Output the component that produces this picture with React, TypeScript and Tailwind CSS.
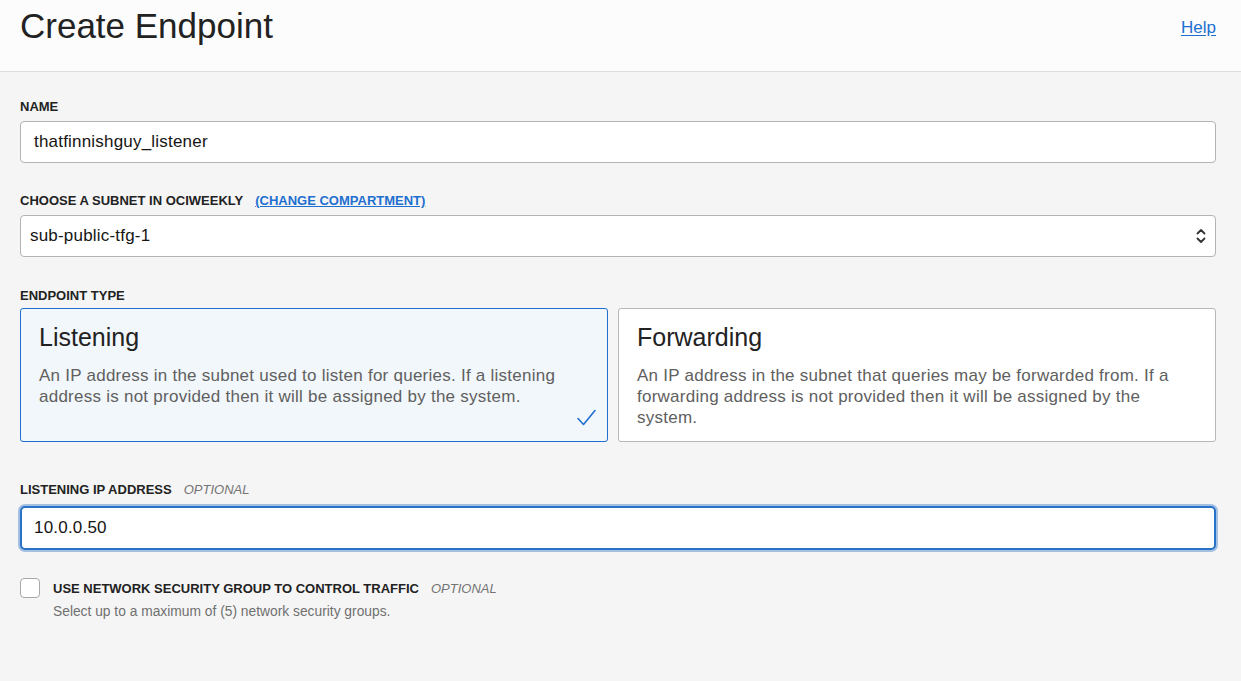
import { useState } from 'react';

const TYPES = [
  {
    key: 'listening',
    title: 'Listening',
    description:
      'An IP address in the subnet used to listen for queries. If a listening address is not provided then it will be assigned by the system.',
  },
  {
    key: 'forwarding',
    title: 'Forwarding',
    description:
      'An IP address in the subnet that queries may be forwarded from. If a forwarding address is not provided then it will be assigned by the system.',
  },
];

export default function App() {
  const [type, setType] = useState('listening');
  const [name, setName] = useState('thatfinnishguy_listener');
  const [ip, setIp] = useState('10.0.0.50');
  const [useNsg, setUseNsg] = useState(false);

  return (
    <div
      className="min-h-screen bg-[#f5f5f5] text-[#161513]"
      style={{ fontFamily: '"Liberation Sans", Arial, sans-serif' }}
    >
      <header className="h-[72px] bg-[#fcfcfc] border-b border-[#dcdcdc] flex items-start justify-between pl-5 pr-[25px]">
        <h1 className="text-[35px] leading-none pt-[8px] text-[#222]">Create Endpoint</h1>
        <a href="#" className="mt-[15px] text-[17px] text-[#1e6fd0] underline underline-offset-2">
          Help
        </a>
      </header>

      <div className="pl-5 pr-[25px] pt-[27px]">
        <label className="block text-[13px] font-semibold leading-4 text-[#222]">NAME</label>
        <input
          value={name}
          onChange={(e) => setName(e.target.value)}
          className="mt-[6px] w-full h-[42px] rounded bg-white border border-[#b3b3b8] px-[13px] text-[17px] tracking-[0.2px] text-[#161513] outline-none"
        />

        <div className="mt-[30px] flex items-center text-[13px] font-semibold leading-4 text-[#222]">
          <span>
            CHOOSE A SUBNET IN <span className="font-bold">OCIWEEKLY</span>
          </span>
          <a href="#" className="ml-[12px] text-[#1e6fd0] underline underline-offset-1">
            (CHANGE COMPARTMENT)
          </a>
        </div>
        <div className="mt-[6px] relative h-[42px] rounded bg-white border border-[#b3b3b8] flex items-center px-[9px] text-[17px] tracking-[0.2px]">
          <span>sub-public-tfg-1</span>
          <svg
            className="absolute right-[8px] top-1/2 -translate-y-1/2"
            width="12"
            height="18"
            viewBox="0 0 12 18"
            fill="none"
            stroke="#333"
            strokeWidth="1.8"
            strokeLinecap="round"
            strokeLinejoin="round"
          >
            <path d="M2.5 6.5 L6 3 L9.5 6.5" />
            <path d="M2.5 11.5 L6 15 L9.5 11.5" />
          </svg>
        </div>

        <div className="mt-[31px] text-[13px] font-semibold leading-4 text-[#222]">ENDPOINT TYPE</div>
        <div className="mt-[4px] grid grid-cols-[588px_1fr] gap-[10px]">
          {TYPES.map((t) => {
            const active = type === t.key;
            return (
              <div
                key={t.key}
                onClick={() => setType(t.key)}
                className={`relative h-[134px] cursor-pointer rounded-[3px] pl-[18px] pr-[30px] pt-[13px] ${
                  active ? 'bg-[#f2f7fb] border border-[#1e6fd0]' : 'bg-white border border-[#b8b8bc]'
                }`}
              >
                <div className="text-[25px] leading-[30px] text-[#222]">{t.title}</div>
                <p className="mt-[13px] text-[17px] leading-[21px] tracking-[0.25px] text-[#606060]">
                  {t.description}
                </p>
                {active && (
                  <svg
                    className="absolute right-[11px] bottom-[15px]"
                    width="19"
                    height="17"
                    viewBox="0 0 19 17"
                    fill="none"
                    stroke="#1e6fd0"
                    strokeWidth="1.6"
                    strokeLinecap="round"
                    strokeLinejoin="round"
                  >
                    <path d="M1 9.5 L6.5 15.5 L18 1.5" />
                  </svg>
                )}
              </div>
            );
          })}
        </div>

        <div className="mt-[40px] flex items-center text-[13px] leading-4">
          <span className="font-semibold text-[#222]">LISTENING IP ADDRESS</span>
          <span className="ml-[12px] italic text-[#747474]">OPTIONAL</span>
        </div>
        <input
          value={ip}
          onChange={(e) => setIp(e.target.value)}
          className="mt-[8px] w-full h-[44px] rounded-[5px] bg-white border-2 border-[#2a72c8] ring-2 ring-[#2a72c8]/40 px-[12px] text-[17px] tracking-[0.2px] text-[#161513] outline-none"
        />

        <div className="mt-[28px] flex items-start">
          <button
            onClick={() => setUseNsg(!useNsg)}
            className="w-[20px] h-[20px] rounded-[4px] border border-[#a9a9ad] bg-white shrink-0"
          />
          <div className="ml-[13px] pt-[3px]">
            <div className="flex items-center text-[13px] leading-4">
              <span className="font-semibold text-[#222]">USE NETWORK SECURITY GROUP TO CONTROL TRAFFIC</span>
              <span className="ml-[12px] italic text-[#747474]">OPTIONAL</span>
            </div>
            <div className="mt-[7px] text-[13.8px] leading-4 text-[#707070]">
              Select up to a maximum of (5) network security groups.
            </div>
          </div>
        </div>
      </div>
    </div>
  );
}
